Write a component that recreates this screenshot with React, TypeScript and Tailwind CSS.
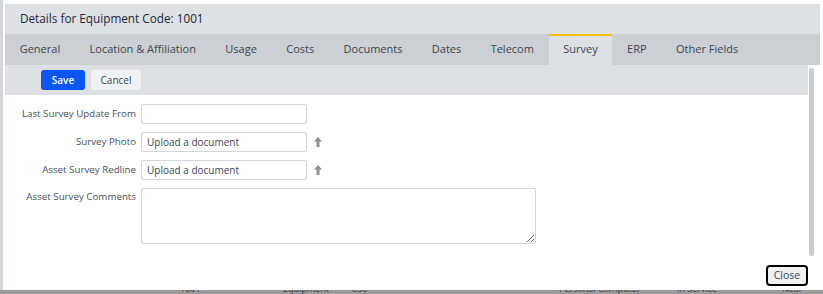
import React from "react";

const tabs = [
  "General",
  "Location & Affiliation",
  "Usage",
  "Costs",
  "Documents",
  "Dates",
  "Telecom",
  "Survey",
  "ERP",
  "Other Fields",
];

function UploadArrow() {
  return (
    <svg width="8" height="10" viewBox="0 0 8 10" className="ml-[7px] shrink-0">
      <path d="M4 0 L8 4.5 L5.5 4.5 L5.5 10 L2.5 10 L2.5 4.5 L0 4.5 Z" fill="#8b9098" />
    </svg>
  );
}

function Row({ label, children, top }: { label: string; children: React.ReactNode; top?: boolean }) {
  return (
    <div className={`flex ${top ? "items-start" : "items-center"}`}>
      <label className={`w-[136px] pr-[5px] text-right text-[9.75px] text-[#4a5058] ${top ? "pt-[2px]" : ""}`}>
        {label}
      </label>
      {children}
    </div>
  );
}

export default function App() {
  return (
    <div className="w-[823px] h-[294px] bg-white overflow-hidden flex flex-col font-['Open_Sans',sans-serif]">
      <div className="flex h-[290px]">
        <div className="w-[3px] bg-[#d3d6da]" />
        <div className="flex-1 pl-[2px] pr-[3px] pt-[4px] flex flex-col">
          {/* Title */}
          <div className="h-[30px] bg-[#dee1e4] flex items-center pl-[15px] text-[11.75px] text-[#1c2738]">
            Details for Equipment Code: 1001
          </div>

          {/* Tabs */}
          <div className="h-[31px] bg-[#ccd0d4] flex">
            {tabs.map((t) => (
              <div
                key={t}
                className={`px-[14.7px] flex items-center text-[11px] text-[#3d4652] ${
                  t === "Survey" ? "bg-[#dee1e4] border-t-2 border-[#f5c400] pb-[2px]" : ""
                }`}
              >
                {t}
              </div>
            ))}
          </div>

          <div className="flex flex-1">
            <div className="flex-1 flex flex-col">
              {/* Toolbar */}
              <div className="h-[30px] bg-[#dee1e4] flex items-center pl-[36px] gap-[6px]">
                <button className="h-[20px] w-[44px] rounded-[3px] bg-[#0a55f5] text-white text-[10px] font-semibold">
                  Save
                </button>
                <button className="h-[20px] w-[50px] rounded-[3px] bg-[#f0f1f3] text-[#3d4652] text-[10px]">
                  Cancel
                </button>
              </div>

              {/* Form */}
              <div className="pt-[9px] flex flex-col gap-[8px]">
                <Row label="Last Survey Update From">
                  <input className="w-[166px] h-[20px] border border-[#d2d5d9] rounded-[2px] outline-none" />
                </Row>
                <Row label="Survey Photo">
                  <input
                    placeholder="Upload a document"
                    className="w-[166px] h-[20px] border border-[#d2d5d9] rounded-[2px] px-[5px] text-[10px] placeholder:text-[#3d4652] outline-none"
                  />
                  <UploadArrow />
                </Row>
                <Row label="Asset Survey Redline">
                  <input
                    placeholder="Upload a document"
                    className="w-[166px] h-[20px] border border-[#d2d5d9] rounded-[2px] px-[5px] text-[10px] placeholder:text-[#3d4652] outline-none"
                  />
                  <UploadArrow />
                </Row>
                <Row label="Asset Survey Comments" top>
                  <textarea className="w-[395px] h-[56px] border border-[#d2d5d9] rounded-[2px] outline-none block" />
                </Row>
              </div>

              <div className="flex-1 flex items-end justify-end pb-[4px]">
                <button className="h-[21px] w-[42px] rounded-[4px] border-2 border-black bg-[#f0f1f3] text-[10.5px] text-[#3d4652]">
                  Close
                </button>
              </div>
            </div>

            {/* Scrollbar */}
            <div className="w-[12px] pl-[1px] pt-[3px]">
              <div className="w-[5px] h-[188px] rounded-[2px] bg-[#c9cdd1]" />
            </div>
          </div>
        </div>
      </div>

      {/* page behind the modal */}
      <div className="h-[4px] bg-[#9c9c9c] overflow-hidden text-[9px] text-[#3a3a3a] leading-[10px]">
        <div className="flex -mt-[6px] pl-[180px]">
          <span className="w-[103px]">1001</span>
          <span className="w-[69px]">Equipment</span>
          <span className="w-[207px]">850</span>
          <span className="w-[118px]">Personal Computer</span>
          <span className="w-[105px]">In Service</span>
          <span>Near</span>
        </div>
      </div>
    </div>
  );
}
